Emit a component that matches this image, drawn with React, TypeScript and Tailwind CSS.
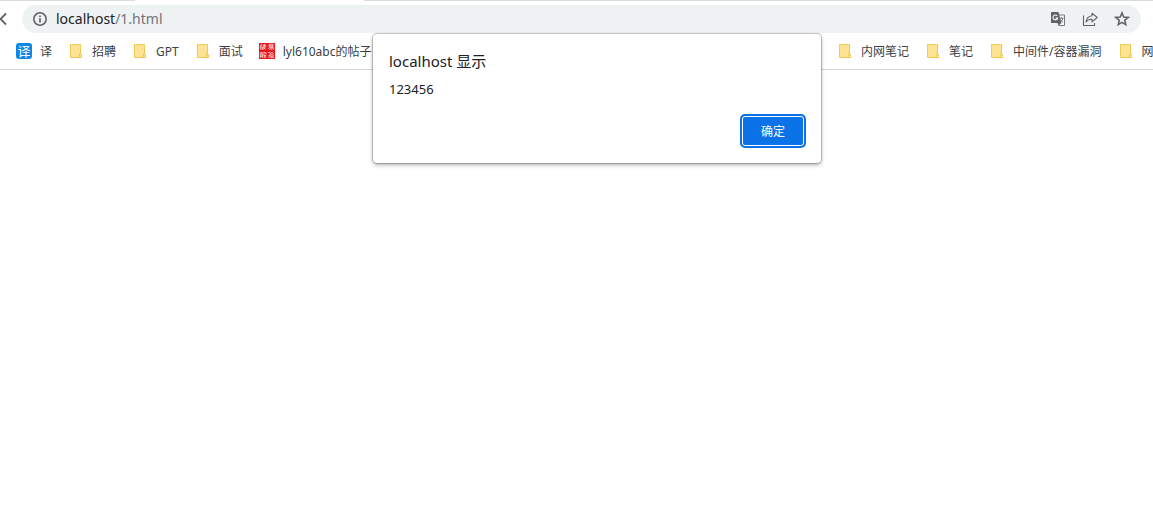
import type { ReactNode } from 'react';

type Bookmark = { label: string; icon: ReactNode };

function FolderIcon() {
  return (
    <svg viewBox="0 0 16 16" className="size-4" aria-hidden="true">
      <path d="M2.5 1.5h10v9l1.2 3.2-1 .8H2.5z" fill="#ffe393" stroke="#edcb55" strokeWidth="1" strokeLinejoin="round" />
      <path d="M12.2 10.2 10.8 14.5h2.6l.3-1z" fill="#fff0b8" stroke="#e6bd3c" strokeWidth=".8" strokeLinejoin="round" />
    </svg>
  );
}

function TranslateBadge() {
  return (
    <span aria-hidden="true" className="flex size-4 items-center justify-center rounded-[3px] bg-[#0c87e8] text-[13px] leading-4 text-white">
      译
    </span>
  );
}

function SealIcon() {
  return (
    <svg viewBox="0 0 16 16" className="size-4" aria-hidden="true">
      <path d="M0 0h16v16H0z" fill="#ee1518" />
      <g fill="none" stroke="#fff" strokeWidth=".7" opacity=".9">
        <path d="M1 2h2.6M2.2 2 1.2 4.5M1.6 4h1.8v2.2H1.6zM4.4 2h2.4v1.6M4.4 2v2.3L3.8 6.6M4.5 3.8h2L4.6 6.6M5 4.6l2 2M5.5 1v2.8" />
        <path d="M10 1.2h4v2.6h-4zM10 2.5h4M10 4.6h4.6L14 7M10.5 4.3 9 6M12 4.8 10 7M13.4 4.8 12 7" />
        <path d="M2 9 1 10.6M2 9.5h1.6l-.6 1M1.4 10.8h2v4M1.4 10.8v4M1.4 12.2h2M1.4 13.5h2M4.4 9.6h2.6v1.8M5.4 9.6l-1 2M4.2 12.6h3M4.4 14h2.8M5.8 11.4V15" />
        <path d="M9 9.5h2.2v3H9.4M11.4 12.4v2.2M9 14h1.8M13 9l-1.6 2M13 9l1.8 2M12.2 11.4h1.8M12 12.4l.6 1.5M13.2 12.2v1.6M14.6 12.2l-.8 2M11.8 14.6h3" />
      </g>
    </svg>
  );
}

const leading: Bookmark[] = [
  { label: '译', icon: <TranslateBadge /> },
  { label: '招聘', icon: <FolderIcon /> },
  { label: 'GPT', icon: <FolderIcon /> },
  { label: '面试', icon: <FolderIcon /> },
  { label: 'lyl610abc的帖子', icon: <SealIcon /> },
];

const trailing: Bookmark[] = [
  { label: '内网笔记', icon: <FolderIcon /> },
  { label: '笔记', icon: <FolderIcon /> },
  { label: '中间件/容器漏洞', icon: <FolderIcon /> },
  { label: '网', icon: <FolderIcon /> },
];

function BookmarkLink({ label, icon }: Bookmark) {
  return (
    <a href="#" className="flex shrink-0 items-center gap-2 text-xs whitespace-nowrap text-[#3c4043]">
      {icon}
      <span className="pt-0.5">{label}</span>
    </a>
  );
}

function Toolbar() {
  return (
    <div className="flex h-8 items-center pt-1 pr-3">
      <button type="button" aria-label="返回" className="w-[22px] shrink-0 text-[#5f6368]">
        <svg viewBox="0 0 22 16" className="h-4 w-[22px]" fill="none" stroke="currentColor" strokeWidth="1.8" aria-hidden="true">
          <path d="M6 2.5.5 8 6 13.5" />
        </svg>
      </button>
      <div className="flex h-7 min-w-0 flex-1 items-center rounded-full bg-[#eff2f3] pr-[11px] pl-[10px] text-[#5f6368]">
        <button type="button" aria-label="查看网站信息">
          <svg viewBox="0 0 16 16" className="size-4" fill="none" stroke="currentColor" aria-hidden="true">
            <circle cx="8" cy="8" r="6.2" strokeWidth="1.6" />
            <path d="M8 7.2v4.2M8 4.5v1.6" strokeWidth="1.7" />
          </svg>
        </button>
        <a href="#" className="ml-2 flex-1 text-sm text-[#70757a]">
          <span className="text-[#202124]">localhost</span>/1.html
        </a>
        <div className="flex gap-4">
          <button type="button" aria-label="翻译此页">
            <svg viewBox="0 0 16 16" className="size-4" aria-hidden="true">
              <path d="M6 4h8.5v10.5H8.5" fill="#f7f9fa" stroke="#777b7f" />
              <path d="M1 1h7.5l3 11H1z" fill="#5f6368" />
              <path d="m8.5 14.5 3-2.5H7.5z" fill="#5f6368" />
              <path d="M7.2 4.9A2.4 2.4 0 1 0 7.7 7H5.5" fill="none" stroke="#fff" strokeWidth="1.1" />
              <path d="M9.7 7.2h4M11.7 6v1.2M13 7.2c-.3 1.6-1.2 2.9-2.3 3.7M10.7 8.7c.5 1 1.4 2 2.4 2.6" fill="none" stroke="#777b7f" strokeWidth=".9" />
            </svg>
          </button>
          <button type="button" aria-label="分享此页">
            <svg viewBox="0 0 16 16" className="size-4" fill="none" stroke="currentColor" strokeWidth="1.1" strokeLinejoin="round" aria-hidden="true">
              <path d="M1.5 4.5v10h11V12" />
              <path d="M10 2.2 15.2 6.5 10 10.8V8.3C7.3 8.2 5.5 9 4 11c.4-3.3 2.3-5.8 6-6.3z" />
            </svg>
          </button>
          <button type="button" aria-label="为此标签页添加书签">
            <svg viewBox="0 0 16 16" className="size-4" fill="none" stroke="currentColor" strokeWidth="1.5" aria-hidden="true">
              <path d="m8 1.9 1.7 4.2 4.5.3-3.5 2.9 1.1 4.4L8 11.3l-3.8 2.4 1.1-4.4-3.5-2.9 4.5-.3z" />
            </svg>
          </button>
        </div>
      </div>
    </div>
  );
}

function AlertDialog() {
  return (
    <div
      role="alertdialog"
      aria-labelledby="dialog-title"
      aria-describedby="dialog-message"
      className="absolute top-[34px] left-[373px] w-[448px] rounded-sm bg-white py-[15px] pr-[15px] pl-4 text-[#202124] shadow-[0_0_1px_1px_rgba(0,0,0,0.22),0_2px_4px_rgba(0,0,0,0.3)]"
    >
      <h1 id="dialog-title" className="text-[15px] leading-6">localhost 显示</h1>
      <p id="dialog-message" className="mt-1 text-[13px] leading-6">123456</p>
      <div className="mt-[13px] flex justify-end">
        <button type="button" className="h-[34px] w-[66px] rounded-[5px] border-2 border-[#0b72e7] bg-[#0b72e7] pt-0.5 text-xs text-white inset-ring inset-ring-white">
          确定
        </button>
      </div>
    </div>
  );
}

export default function App() {
  return (
    <div className="relative min-h-screen overflow-hidden bg-white font-['Noto_Sans','Noto_Sans_CJK_SC',sans-serif]">
      <header className="border-b border-[#d5d7da]">
        <div className="flex h-px" aria-hidden="true">
          <span className="w-[135px] bg-[#d9dbde]" />
          <span className="w-[229px] bg-white" />
          <span className="flex-1 bg-[#d9dbde]" />
        </div>
        <Toolbar />
        <nav aria-label="书签" className="flex h-9 items-center justify-between pl-4">
          <div className="flex shrink-0 gap-4">
            {leading.map((item) => (
              <BookmarkLink key={item.label} {...item} />
            ))}
          </div>
          <div className="flex w-[316px] gap-4 overflow-hidden">
            {trailing.map((item) => (
              <BookmarkLink key={item.label} {...item} />
            ))}
          </div>
        </nav>
      </header>
      <AlertDialog />
    </div>
  );
}
